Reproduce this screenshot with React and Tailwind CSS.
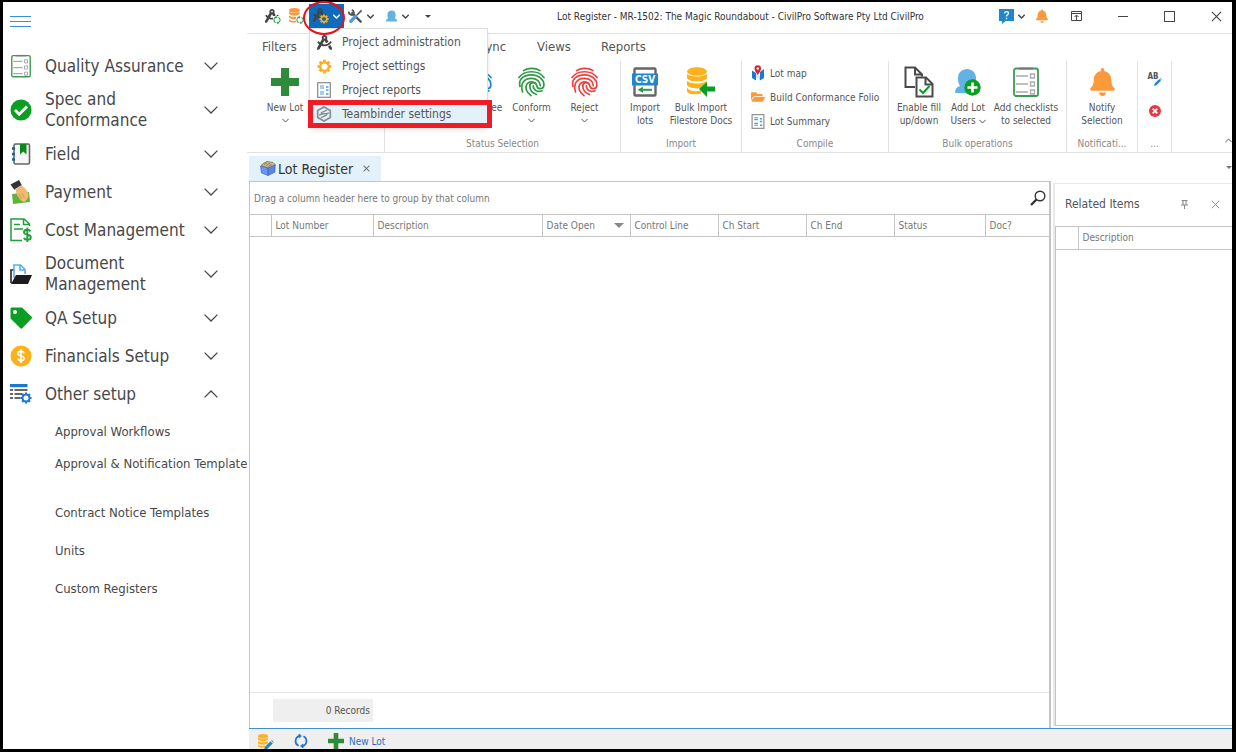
import React, { useState } from "react";
import { FaBell, FaDraftingCompass, FaFolderOpen } from "react-icons/fa";

const Chevron = ({ className = "w-[7px] h-[5px]", up = false, stroke = 1.6 }) => (
  <svg viewBox="0 0 14 8" className={`shrink-0 ${className}`} fill="none" stroke="currentColor" strokeWidth={stroke}>
    {up ? <path d="M.6 7.4 7 1l6.4 6.4" /> : <path d="M.6.6 7 7l6.4-6.4" />}
  </svg>
);

const ChecklistIcon = ({ className }) => (
  <svg viewBox="0 0 26 30" className={className} fill="none">
    <rect x="1" y="1.5" width="24" height="27.5" rx="2" fill="#fff" stroke="#3f9a55" strokeWidth="1.8" />
    <path d="M6 .6h14v1.9H6z" fill="#777" />
    <path d="M3 9h12M3 17h12M3 25h12" stroke="#aaa" strokeWidth="1.6" />
    <path d="M17.500 7h4v4h-4zM17.500 15h4v4h-4zM17.500 23h4v4h-4z" stroke="#aaa" strokeWidth="1.3" />
  </svg>
);

const CheckCircleIcon = ({ className }) => (
  <svg viewBox="0 0 22 22" className={className}>
    <circle cx="11" cy="11" r="10.5" fill="#0a9e23" />
    <path d="m5 11 4.200 4.200L17 7.500" fill="none" stroke="#fff" strokeWidth="2.8" />
  </svg>
);

const NotebookIcon = ({ className }) => (
  <svg viewBox="0 0 20 22" className={className}>
    <rect x="3" y="1" width="15.5" height="20" rx="1.5" fill="#f6f6f6" stroke="#666" strokeWidth="1.6" />
    <path d="M1 5.500h3M1 11h3M1 16.500h3" stroke="#1f5f8b" strokeWidth="2.4" />
    <path d="M9 1h6.500v10.500l-3.200-3-3.300 3z" fill="#0a8a1c" />
  </svg>
);

const PaymentIcon = ({ className }) => (
  <svg viewBox="0 0 22 24" className={className}>
    <path d="m2 14 17-2 1 10-17 2z" fill="#5fb53b" />
    <path d="M5.500 9 11 5.500c3 1 6 4.500 7.500 8.500 0 3-1 6-3.500 7.500-2 1-4-.5-6-3.500-2-2.500-3-5-3.500-9z" fill="#f5b872" />
    <path d="m9 14 2.500 5M12 13l2.500 5" stroke="#c98d4c" strokeWidth=".7" />
    <path d="M.5 4.500 9 0l3 5.500L4.500 10z" fill="#333" />
    <path d="m4.500 9.800 7.200-4.400" stroke="#ddd" strokeWidth="1" />
  </svg>
);

const CostIcon = ({ className }) => (
  <svg viewBox="0 0 22 24" className={className} fill="none" stroke="#1fa038" strokeWidth="1.5">
    <path d="M12 22.500H1V1h13l5.500 5v2M13.500 1v5.500h6" />
    <path d="M4 6.500h6M4 11h9" />
    <path d="M20.500 13.500c-.7-1.300-1.800-1.800-3.300-1.800-1.900 0-3.200.9-3.200 2.500 0 3.400 6.800 1.700 6.800 5 0 1.700-1.500 2.600-3.400 2.600-1.700 0-3-.7-3.600-2M17.300 9.500V24" strokeWidth="1.9" />
  </svg>
);

const DocumentFolderIcon = ({ className }) => (
  <svg viewBox="0 0 22 20" className={className}>
    <path d="M1 19V6h3" fill="none" stroke="#222" strokeWidth="1.6" />
    <path d="M4 14V1h6.500L15 5.500V10M10 1v5h5" fill="#fff" stroke="#5aaeea" strokeWidth="1.6" />
    <path d="M6 11h16l-4 9H1z" fill="#1c1c1c" />
  </svg>
);

const TagIcon = ({ className }) => (
  <svg viewBox="0 0 22 22" className={className}>
    <path fillRule="evenodd" d="M2 .5h10l9.600 9.300c.6.6.6 1.200 0 1.800l-9.400 9.600c-.6.6-1.200.6-1.800 0L.5 11.500V2C.5 1 1 .5 2 .5zM5 3a2 2 0 1 0 0 4 2 2 0 0 0 0-4z" fill="#0a9e23" />
  </svg>
);

const CoinIcon = ({ className }) => (
  <svg viewBox="0 0 22 22" className={className} fill="none">
    <circle cx="11" cy="11" r="10.5" fill="#fdb11b" />
    <path d="M14.200 8.200C13.700 7 12.600 6.400 11 6.400c-1.800 0-3.100.8-3.100 2.200 0 3.200 6.300 1.500 6.300 4.700 0 1.500-1.400 2.300-3.200 2.300-1.700 0-2.900-.7-3.300-2M11 4v14" stroke="#fff" strokeWidth="1.6" />
  </svg>
);

const Gear = ({ color, hole = "#fff" }) => (
  <>
    {[0, 45, 90, 135].map((a) => (
      <path key={a} d="M12 1v22" stroke={color} strokeWidth="4.5" transform={`rotate(${a} 12 12)`} />
    ))}
    <circle cx="12" cy="12" r="8.500" fill={color} />
    <circle cx="12" cy="12" r="5" fill={hole} />
  </>
);

const GearIcon = ({ className, color = "#fdae1c", hole }) => (
  <svg viewBox="0 0 24 24" className={className}>
    <Gear color={color} hole={hole} />
  </svg>
);

const ListGearIcon = ({ className }) => (
  <svg viewBox="0 0 22 20" className={className}>
    <path d="M0 0h17.500v3.200H0z" fill="#1b78d0" />
    <path d="M0 6h3M4.500 6h13M0 10h3M4.500 10h8M0 14h3M4.500 14h6" stroke="#666" strokeWidth="1.9" />
    <svg x="10" y="8" width="12" height="12" viewBox="0 0 24 24">
      <Gear color="#1b78d0" />
    </svg>
  </svg>
);

const ReportIcon = ({ className }) => (
  <svg viewBox="0 0 14 16" className={className} fill="none">
    <rect x=".7" y=".7" width="12.6" height="14.6" fill="#fff" stroke="#888" strokeWidth="1.2" />
    <path d="M3 4h4M3 6h4M3 10h4M3 12h4" stroke="#4a9ce0" strokeWidth="1.2" />
    <path d="M9 5h2.500M9 8h2.500M9 12h2.500" stroke="#4a9ce0" strokeWidth="1.6" />
  </svg>
);

const TeambinderIcon = ({ className }) => (
  <svg viewBox="0 0 16 16" className={className} fill="none" stroke="#8a8f94" strokeWidth="1.7">
    <path d="M8 .9 14.300 4.400v7.200L8 15.100 1.700 11.600V4.400z" />
    <path d="M11 4.200 6 6.300c-1.400.8-1 1.700.3 1.500l3.400-.2c1.500-.1 1.500 1.200.3 1.800l-5 2.300M13 6.800 9.500 8M3 9.200 6.500 8" strokeWidth="1.400" />
  </svg>
);

const FingerprintIcon = ({ className }) => (
  <svg viewBox="0 0 27 30" className={className} fill="none" stroke="currentColor" strokeWidth="1.7" strokeLinecap="round">
    <path d="M5.500 3.600C10 .6 17.500.6 22 3.600" />
    <path d="M1 10.500C6.500 2.800 20.500 2.800 26 10.500" />
    <path d="M2 19.500C0 11.500 6.500 7.800 13.500 7.800c7.500 0 13 5.500 12.300 11-.6 3.700-6.300 3.900-7 0-.7-4.600-7.300-4.200-7 .5.200 4 2.700 7 6.700 8.200" />
    <path d="M4.500 25C2.200 17 5.500 11.300 13.500 11.300c5 0 8.700 3.200 8.800 7.400" />
    <path d="M13 28.700c-5-4-5.700-8.500-4.300-11.300 2-3.500 7-3 8.500-.8M15.300 18.800c0 4.500 4 6.700 8.700 5" />
  </svg>
);

const DatabaseIcon = ({ className, color = "#fdb11b", children }) => (
  <svg viewBox="0 0 28 30" className={className}>
    <g fill={color}>
      <ellipse cx="10" cy="4.500" rx="10" ry="4.300" />
      <path d="M0 6.500c2 4 18 4 20 0v4.500c-2 4.500-18 4.500-20 0z" />
      <path d="M0 13.500c2 4 18 4 20 0V18c-2 4.500-18 4.500-20 0z" />
      <path d="M0 20.500c2 4 10 4.500 14 3v3c-5 1.500-12 1-14-2z" />
    </g>
    {children}
  </svg>
);

const PlusIcon = ({ className }) => (
  <svg viewBox="0 0 28 28" className={className}>
    <path d="M10 0h8v10h10v8H18v10h-8V18H0v-8h10z" fill="#2f8b3a" />
  </svg>
);

const CsvIcon = ({ className }) => (
  <svg viewBox="0 0 26 30" className={className} fill="none">
    <rect x="2.5" y="1.5" width="21" height="27" rx="1" fill="#fff" stroke="#666" strokeWidth="2.4" />
    <rect x="0" y="6.5" width="26" height="12" fill="#1f86cf" />
    <text x="13" y="16" textAnchor="middle" fontSize="10" fontWeight="bold" fill="#fff" fontFamily="DejaVu Sans Condensed">CSV</text>
    <path d="M20 22.800H9" stroke="#2f9a45" strokeWidth="2" />
    <path d="m5.500 22.800 5.500-3v6z" fill="#2f9a45" />
  </svg>
);

const MapIcon = ({ className }) => (
  <svg viewBox="0 0 14 16" className={className}>
    <path d="M1 5.500 5 8v7.500L1 13zM13 4 9 7v8.500l4-2.500z" fill="#1b78d0" />
    <path d="m5 8 4 3v4.500L5 12z" fill="#cfe4f8" />
    <path d="M6.800 10C4.500 6.700 3.500 5.200 3.500 3.500a3.200 3.200 0 0 1 6.500 0c0 1.700-1 3.200-3.200 6.500z" fill="#d9222a" />
    <circle cx="6.800" cy="3.500" r="1.200" fill="#fff" />
  </svg>
);

const PagesCheckIcon = ({ className }) => (
  <svg viewBox="0 0 30 32" className={className} fill="none" stroke="#4a4a4a" strokeWidth="2">
    <path d="M11 21H1.500V1.500H11l7 7v2M11 1.500v7h7" />
    <path d="M12.500 11.500H22l6.500 6.500v12.500h-16z" fill="#fff" />
    <path d="M21.500 11.500v7h7" />
    <path d="m15.500 23.500 3.500 3.500 6.500-7" stroke="#0a9e23" />
  </svg>
);

const UserIcon = ({ className, children }) => (
  <svg viewBox="0 0 26 28" className={className}>
    <path d="M0 25c0-3.800 1.500-6 5-7C3.500 16 3 13 3 10 3 4.500 7 1 12 1s9 3.500 9 9c0 3-.5 6-2 8 3.500 1 5 3.200 5 7z" fill="#62b3e4" />
    {children}
  </svg>
);

const ToolsIcon = ({ className }) => (
  <svg viewBox="0 0 16 16" className={className} fill="none">
    <path d="m4.500 4.500 9 9" stroke="#555" strokeWidth="2.6" strokeLinecap="round" />
    <path d="M1 2.800A3 3 0 0 0 5.300 6 3 3 0 0 0 4 1" stroke="#555" strokeWidth="2" />
    <path d="M13.800.8 15.200 2.200 9.500 7.500 8.500 6.500z" fill="#555" />
    <path d="m8 8-5 5" stroke="#4a9ce0" strokeWidth="3.600" strokeLinecap="round" />
  </svg>
);

const CrossIcon = ({ className, stroke = 1.2 }) => (
  <svg viewBox="0 0 12 12" className={className} stroke="currentColor" strokeWidth={stroke}>
    <path d="m1 1 10 10M11 1 1 11" />
  </svg>
);

const RefreshIcon = ({ className, color = "#1b78d0" }) => (
  <svg viewBox="0 0 14 14" className={className} fill="none" stroke={color} strokeWidth="1.8">
    <path d="M4.600 11.800A5.300 5.300 0 0 1 5.500 1.900M9.400 2.200a5.300 5.300 0 0 1-.9 9.900" />
    <path d="M5 0v4l2.500-2zM9 14v-4l-2.500 2z" fill={color} strokeWidth=".8" />
  </svg>
);

const PencilIcon = ({ className }) => (
  <svg viewBox="0 0 10 10" className={className}>
    <path d="M0 10 .8 7 6.500 1.300l2.200 2.200L3 9.200zM7.200.6l.6-.5 2.100 2.100-.6.6z" fill="#1f86cf" />
  </svg>
);

const BoxIcon = ({ className }) => (
  <svg viewBox="0 0 16 15" className={className}>
    <path d="M1 4.500 4 2l3-1.500 3 .5 3 .5 2 2v1L8 7z" fill="#c9b98a" stroke="#6b6247" strokeWidth=".7" />
    <path d="m4 3.500 3-1.500M6 4.500l4-2M8 5.500l4-2" stroke="#6b6247" strokeWidth=".6" />
    <path d="M.5 5 8 7.200v7.300L1.500 12z" fill="#6b96f5" stroke="#3b5aa8" strokeWidth=".6" />
    <path d="m8 7.200 7.300-3.400-.5 7.500L8 14.500z" fill="#5a84ea" stroke="#3b5aa8" strokeWidth=".6" />
  </svg>
);

const menuSections = [
  { label: "Quality Assurance", icon: <ChecklistIcon className="w-5 h-6" /> },
  { label: "Spec and Conformance", icon: <CheckCircleIcon className="w-[22px] h-[22px]" />, tall: true },
  { label: "Field", icon: <NotebookIcon className="w-5 h-[22px]" /> },
  { label: "Payment", icon: <PaymentIcon className="w-[22px] h-6" /> },
  { label: "Cost Management", icon: <CostIcon className="w-[22px] h-6" /> },
  { label: "Document Management", icon: <DocumentFolderIcon className="w-[22px] h-5" />, tall: true },
  { label: "QA Setup", icon: <TagIcon className="w-[22px] h-[22px]" /> },
  { label: "Financials Setup", icon: <CoinIcon className="w-[22px] h-[22px]" /> },
  { label: "Other setup", icon: <ListGearIcon className="w-[22px] h-5" />, open: true },
];

const Sidebar = () => (
  <nav className="w-[244px] shrink-0 overflow-hidden text-[#484848]">
    <button aria-label="Toggle menu" className="h-[45px] pl-[7px] pt-[13px] flex items-start">
      <svg viewBox="0 0 22 12" className="w-[22px] h-3" stroke="#3b8ed8" strokeWidth="1">
        <path d="M0 1.500h21M0 6.500h21M0 11.500h21" />
      </svg>
    </button>
    {menuSections.map((item) => (
      <button
        key={item.label}
        aria-expanded={!!item.open}
        className={`w-full flex items-center pl-[7px] text-left text-[17px] leading-[21px] ${item.tall ? "h-[50px]" : "h-[38px]"}`}
      >
        <span className="w-[22px] flex justify-center shrink-0">{item.icon}</span>
        <span className="w-[150px] ml-[13px]">{item.label}</span>
        <Chevron className="w-[14px] h-2 ml-[9px]" up={item.open} stroke={1.3} />
      </button>
    ))}
    <ul className="pl-[52px] text-[13px] leading-5 whitespace-nowrap">
      <li className="h-[37px] flex items-center"><a href="#">Approval Workflows</a></li>
      <li className="h-11 pt-1"><a href="#">Approval &amp; Notification Template</a></li>
      <li className="h-[38px] flex items-center"><a href="#">Contract Notice Templates</a></li>
      <li className="h-[38px] flex items-center"><a href="#">Units</a></li>
      <li className="h-[38px] flex items-center"><a href="#">Custom Registers</a></li>
    </ul>
  </nav>
);

const projectMenu = [
  { label: "Project administration", icon: <FaDraftingCompass className="w-[15px] h-[15px] text-[#444]" /> },
  { label: "Project settings", icon: <GearIcon className="w-[15px] h-[15px]" /> },
  { label: "Project reports", icon: <ReportIcon className="w-[14px] h-4" /> },
  { label: "Teambinder settings", icon: <TeambinderIcon className="w-4 h-4" />, active: true },
];

const ProjectMenu = () => (
  <div className="absolute left-0 top-[24px] z-10 w-[179px] border border-[#ddd] bg-white pt-px shadow-md">
    {projectMenu.map((item) => (
      <button
        key={item.label}
        className={`relative w-full h-6 flex items-center pl-1.5 text-xs text-[#555] ${item.active ? "bg-[#e3f1fb]" : ""}`}
      >
        <span className="w-4 flex justify-center mr-[10px]">{item.icon}</span>
        {item.label}
        {item.active && <span className="absolute -left-[2px] -right-[5px] -top-[2px] -bottom-[2px] border-5 border-[#ee1c25]" />}
      </button>
    ))}
  </div>
);

const TitleBar = () => {
  const [open, setOpen] = useState(true);

  return (
    <header className="h-8 pb-[3px] pl-0.5 grid grid-cols-[1fr_auto_1fr] items-center border-b border-[#e2e2e2] text-[#444]">
      <div className="flex items-center h-full pl-4">
        <button aria-label="Open project" className="relative w-[18px] h-4">
          <FaDraftingCompass className="w-[14px] h-[14px]" />
          <RefreshIcon className="absolute left-2 top-2 w-2 h-2 bg-white" color="#1fa038" />
        </button>
        <button aria-label="Sync database" className="relative w-4 h-4 ml-1.5">
          <DatabaseIcon className="w-[15px] h-4" color="#fb9a3c" />
          <RefreshIcon className="absolute left-[7px] top-2 w-2 h-2 bg-white" color="#3f9a55" />
        </button>
        <div className="relative ml-1">
          <button
            aria-label="Project menu"
            aria-expanded={open}
            onClick={() => setOpen(!open)}
            className="w-[35px] h-6 bg-[#0f6cbd] flex items-center pl-1 gap-[3px] text-white"
          >
            <span className="relative w-[17px] h-4">
              <FaDraftingCompass className="w-[14px] h-[14px] text-[#444]" />
              <GearIcon className="absolute left-[6px] top-[6px] w-[10px] h-[10px]" hole="#0f6cbd" />
            </span>
            <Chevron stroke={2.6} />
          </button>
          {open && <ProjectMenu />}
          <span className="absolute z-20 -left-[6px] -top-[3px] w-[42px] h-[34px] rounded-[50%] border-2 border-[#e3121b] pointer-events-none" />
        </div>
        <button aria-label="Tools" className="flex items-center gap-1 ml-1">
          <ToolsIcon className="w-[15px] h-[15px]" />
          <Chevron stroke={2.6} />
        </button>
        <button aria-label="Account" className="flex items-center gap-1 ml-3">
          <UserIcon className="w-3 h-[13px]" />
          <Chevron stroke={2.6} />
        </button>
        <button aria-label="Customise toolbar" className="ml-4 border-x-[3px] border-t-[3px] border-x-transparent border-t-[#444]" />
      </div>
      <h1 className="text-[10px] text-[#333] whitespace-nowrap">
        Lot Register - MR-1502: The Magic Roundabout - CivilPro Software Pty Ltd CivilPro
      </h1>
      <div className="flex items-center justify-end pr-[10px]">
        <button aria-label="Help" className="flex items-center gap-1">
          <svg viewBox="0 0 15 15" className="w-[15px] h-[15px]">
            <path d="M0 0h15v12H6.500L3 15v-3H0z" fill="#1f86cf" />
            <path d="M5.500 4.300C5.700 3.200 6.400 2.600 7.500 2.600c1.200 0 2 .7 2 1.700 0 1.500-2 1.500-2 3.200M7.500 8.700v1.500" fill="none" stroke="#fff" strokeWidth="1.3" />
          </svg>
          <Chevron stroke={2.6} />
        </button>
        <button aria-label="Notifications" className="ml-[11px]"><FaBell className="w-3 h-[14px] text-[#fc9a3b]" /></button>
        <button aria-label="Ribbon display" className="ml-[23px]">
          <svg viewBox="0 0 11 10" className="w-[11px] h-[10px]" fill="none" stroke="#444">
            <path d="M.5.5h10v9H.5zM.5 2.500h10M5.500 9V4.500M3.500 6l2-2 2 2" />
          </svg>
        </button>
        <button aria-label="Minimise" className="ml-9 w-[10px] h-px bg-[#444]" />
        <button aria-label="Maximise" className="ml-9 w-[11px] h-[11px] border border-[#444]" />
        <button aria-label="Close" className="ml-9"><CrossIcon className="w-[11px] h-[11px]" /></button>
      </div>
    </header>
  );
};

const BigButton = ({ icon, label, width, arrow, inlineArrow }) => (
  <button className={`${width} shrink-0 flex flex-col items-center text-[10px] leading-[13px]`}>
    <span className="h-10 flex items-center pt-0.5">{icon}</span>
    <span className="whitespace-pre-line">
      {label}
      {inlineArrow && <Chevron className="inline w-[7px] h-[5px] ml-[3px]" stroke={2} />}
    </span>
    {arrow && <Chevron className="w-[7px] h-[5px] mt-1" stroke={2} />}
  </button>
);

const RibbonGroup = ({ width, label, children, className = "" }) => (
  <section className={`${width} shrink-0 flex flex-col border-r border-[#e2e2e2]`}>
    <div className={`h-[75px] flex ${className}`}>{children}</div>
    <h2 className="text-[10px] leading-4 text-center text-[#888]">{label}</h2>
  </section>
);

const Ribbon = () => (
  <div className="border-b border-[#e2e2e2] text-[#555] overflow-hidden">
    <div className="flex h-[27px] items-center pb-0.5 pl-[15px] text-[13px]">
      <button className="w-[216px] text-left">Filters</button>
      <button className="w-[59px] text-left">Sync</button>
      <button className="w-16 text-left">Views</button>
      <button>Reports</button>
    </div>
    <div className="flex h-[91px] pl-0.5">
      <RibbonGroup width="w-[136px]" label="" className="pl-[10px]">
        <BigButton width="w-[52px]" label="New Lot" arrow icon={<PlusIcon className="w-7 h-7" />} />
      </RibbonGroup>
      <RibbonGroup width="w-[236px]" label="Status Selection" className="justify-end pr-[9px]">
        <BigButton width="w-[53px]" label="Guarantee" arrow icon={<FingerprintIcon className="w-[27px] h-[30px] text-[#1f86cf]" />} />
        <BigButton width="w-[53px]" label="Conform" arrow icon={<FingerprintIcon className="w-[27px] h-[30px] text-[#2f9a45]" />} />
        <BigButton width="w-[53px]" label="Reject" arrow icon={<FingerprintIcon className="w-[27px] h-[30px] text-[#ee3f3f]" />} />
      </RibbonGroup>
      <RibbonGroup width="w-[121px]" label="Import">
        <BigButton width="w-12" label={"Import\nlots"} icon={<CsvIcon className="w-[26px] h-[30px]" />} />
        <BigButton
          width="w-16"
          label={"Bulk Import\nFilestore Docs"}
          icon={
            <DatabaseIcon className="w-7 h-[30px]">
              <path d="m12 22 8-7v4.500h8v5h-8V30z" fill="#0a9e23" />
            </DatabaseIcon>
          }
        />
      </RibbonGroup>
      <RibbonGroup width="w-[147px]" label="Compile" className="flex-col pl-[9px] text-[10px] whitespace-nowrap">
        <button className="h-6 flex items-center gap-[5px]"><MapIcon className="w-[14px] h-4" />Lot map</button>
        <button className="h-6 flex items-center gap-[5px]"><FaFolderOpen className="w-[14px] h-[14px] text-[#fc9a3b]" />Build Conformance Folio</button>
        <button className="h-6 flex items-center gap-[5px]"><ReportIcon className="w-[14px] h-[15px]" />Lot Summary</button>
      </RibbonGroup>
      <RibbonGroup width="w-[178px]" label="Bulk operations" className="pl-[5px]">
        <BigButton width="w-[50px]" label={"Enable fill\nup/down"} icon={<PagesCheckIcon className="w-[30px] h-8" />} />
        <BigButton
          width="w-12"
          label={"Add Lot\nUsers"}
          inlineArrow
          icon={
            <UserIcon className="w-[26px] h-7">
              <circle cx="17.500" cy="19.500" r="8.2" fill="#0a9e23" />
              <path d="M17.500 14.500v10M12.500 19.500h10" stroke="#fff" strokeWidth="2.6" />
            </UserIcon>
          }
        />
        <BigButton width="w-[68px]" label={"Add checklists\nto selected"} icon={<ChecklistIcon className="w-[26px] h-[30px]" />} />
      </RibbonGroup>
      <RibbonGroup width="w-[71px]" label="Notificati..." className="justify-center">
        <BigButton width="w-[60px]" label={"Notify\nSelection"} icon={<FaBell className="w-[25px] h-7 text-[#fc9a3b]" />} />
      </RibbonGroup>
      <RibbonGroup width="w-[34px]" label="..." className="flex-col items-center">
        <button aria-label="Rename" className="relative w-[14px] h-8 pt-3 flex">
          <span className="text-[8px] leading-[8px] font-bold">AB</span>
          <PencilIcon className="absolute left-[6px] top-[17px] w-2 h-2" />
        </button>
        <button aria-label="Delete" className="mt-3">
          <svg viewBox="0 0 12 12" className="w-3 h-3">
            <circle cx="6" cy="6" r="6" fill="#e8383f" />
            <path d="m3.700 3.700 4.600 4.600M8.300 3.700 3.700 8.300" stroke="#fff" strokeWidth="1.8" />
          </svg>
        </button>
      </RibbonGroup>
      <button aria-label="Collapse ribbon" className="ml-auto self-end mb-[9px]"><Chevron up className="w-[7px] h-[5px]" stroke={2} /></button>
    </div>
  </div>
);

const columns = ["Lot Number", "Description", "Date Open", "Control Line", "Ch Start", "Ch End", "Status", "Doc?"];

const LotGrid = () => (
  <section className="flex-1 min-w-0 flex flex-col border-l border-t border-r-2 border-[#c4c4c4]">
    <div className="h-8 flex items-center justify-between pl-1 pr-[3px] text-[10px] text-[#777]">
      Drag a column header here to group by that column
      <button aria-label="Search">
        <svg viewBox="0 0 16 16" className="w-4 h-4" fill="none" stroke="#333">
          <circle cx="10" cy="6" r="4.8" strokeWidth="1.4" />
          <path d="M6.500 9.500 1 15" strokeWidth="2.4" />
        </svg>
      </button>
    </div>
    <table className="w-full table-fixed border-y border-[#c4c4c4] text-[10px] text-[#777]">
      <colgroup>
        <col className="w-[21px]" />
        <col className="w-[102px]" />
        <col className="w-[169px]" />
        <col className="w-[88px]" />
        <col className="w-[88px]" />
        <col className="w-[88px]" />
        <col className="w-[88px]" />
        <col className="w-[91px]" />
        <col />
      </colgroup>
      <thead>
        <tr className="h-[22px]">
          <th aria-label="Row" className="border-r border-[#c4c4c4]" />
          {columns.map((name) => (
            <th key={name} className="border-r border-[#c4c4c4] last:border-r-0 px-1 text-left font-normal">
              <span className="flex items-center justify-between">
                {name}
                {name === "Date Open" && <span className="border-x-[5px] border-t-[5px] border-x-transparent border-t-[#888] mr-0.5" />}
              </span>
            </th>
          ))}
        </tr>
      </thead>
    </table>
    <footer className="mt-auto h-9 border-t border-[#e2e2e2] flex items-center pl-[23px]">
      <span className="w-[100px] h-[23px] bg-[#efefef] flex items-center justify-end pr-[3px] text-[10px] text-[#555]">0 Records</span>
    </footer>
  </section>
);

const RelatedItems = () => (
  <aside className="w-[179px] shrink-0 ml-[2px] mt-0.5 mb-0.5 flex flex-col border-l-2 border-t border-[#e8e8e8]">
    <div className="h-[42px] flex items-center pb-0.5 pl-[10px] pr-3 text-[#555]">
      <h2 className="text-xs flex-1">Related Items</h2>
      <button aria-label="Pin" className="mr-[22px]">
        <svg viewBox="0 0 9 9" className="w-[9px] h-[9px]" fill="none" stroke="#888">
          <path d="M1.500.5h6M3 .5v4M6 .5v4M1 5h7M4.500 5v4" strokeWidth="1.1" />
        </svg>
      </button>
      <button aria-label="Close panel"><CrossIcon className="w-[9px] h-[9px] text-[#888]" /></button>
    </div>
    <div className="flex-1 border-l border-y border-[#c4c4c4]">
      <table className="w-full text-[10px] text-[#777] border-b border-[#c4c4c4]">
        <thead>
          <tr className="h-[22px]">
            <th aria-label="Row" className="w-[22px] border-r border-[#c4c4c4]" />
            <th className="px-1 text-left font-normal">Description</th>
          </tr>
        </thead>
      </table>
    </div>
  </aside>
);

const StatusBar = () => (
  <footer className="h-[21px] border-t border-[#3f8fcf] bg-[#efefef] flex items-center pl-2 pt-1 ml-0.5 overflow-hidden">
    <button aria-label="Edit database" className="relative w-[17px] h-[15px]">
      <DatabaseIcon className="w-4 h-[15px]" />
      <PencilIcon className="absolute left-[7px] top-[6px] w-[10px] h-[10px]" />
    </button>
    <button aria-label="Refresh" className="ml-5"><RefreshIcon className="w-[14px] h-[14px]" /></button>
    <button className="ml-5 flex items-center gap-[5px] text-[10px] text-[#2a6ebb]">
      <PlusIcon className="w-4 h-4" />
      New Lot
    </button>
  </footer>
);

const App = () => (
  <div className="min-h-screen flex bg-white border-black border-t-2 border-l-3 border-r-4 border-b-3 font-['DejaVu_Sans_Condensed','Noto_Sans',sans-serif]">
    <Sidebar />
    <main className="flex-1 min-w-0 flex flex-col">
      <TitleBar />
      <Ribbon />
      <div className="h-7 flex items-end justify-between pl-0.5">
        <div className="h-[25px] w-[132px] bg-[#e3f1fb] flex items-center pl-[11px] text-sm text-[#333]">
          <BoxIcon className="w-4 h-[15px] mr-0.5" />
          Lot Register
          <button aria-label="Close tab" className="ml-[10px]"><CrossIcon className="w-[7px] h-[7px] text-[#777]" stroke={1.8} /></button>
        </div>
        <button aria-label="Open tabs" className="self-center border-x-[3px] border-t-[3px] border-x-transparent border-t-[#777]" />
      </div>
      <div className="flex-1 flex pl-0.5">
        <LotGrid />
        <RelatedItems />
      </div>
      <StatusBar />
    </main>
  </div>
);

export default App;
